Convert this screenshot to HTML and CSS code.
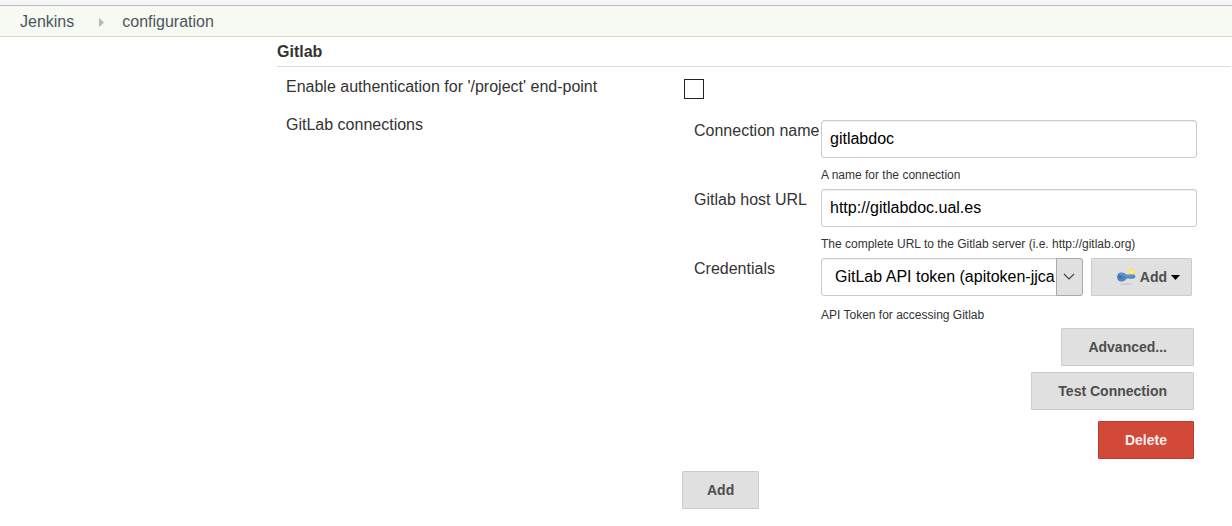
FILE: index.html
```html
<!DOCTYPE html>
<html lang="en">
<head>
<meta charset="utf-8">
<title>configuration [Jenkins]</title>
<link rel="stylesheet" href="styles.css">
</head>
<body>
<header class="topbar"></header>
<nav class="breadcrumbs" aria-label="Breadcrumb">
  <a class="crumb" href="#jenkins">Jenkins</a>
  <svg class="crumb-arrow" width="5" height="9" viewBox="0 0 5 9" aria-hidden="true"><path d="M0 0L5 4.5L0 9Z" fill="#b4b6b2"/></svg>
  <a class="crumb" href="#configuration">configuration</a>
</nav>
<main class="content">
  <h2 class="section-title">Gitlab</h2>
  <form class="settings">
    <label class="setting-name" for="auth">Enable authentication for '/project' end-point</label>
    <div class="setting-value"><input class="checkbox" type="checkbox" id="auth"></div>

    <div class="setting-name">GitLab connections</div>
    <div class="setting-value">
      <div class="connection">
        <label class="field-name" for="name">Connection name</label>
        <div class="field">
          <input class="textbox" type="text" id="name" value="gitlabdoc">
          <p class="help">A name for the connection</p>
        </div>
        <label class="field-name" for="url">Gitlab host URL</label>
        <div class="field">
          <input class="textbox" type="text" id="url" value="http://gitlabdoc.ual.es">
          <p class="help">The complete URL to the Gitlab server (i.e. http://gitlab.org)</p>
        </div>
        <label class="field-name" for="credentials">Credentials</label>
        <div class="field">
          <div class="credentials">
            <div class="select-wrap">
              <select class="select" id="credentials"><option>GitLab API token (apitoken-jjca</option></select>
              <span class="select-arrow"><svg width="12" height="8" viewBox="0 0 12 8" aria-hidden="true"><path d="M1 1L6 6L11 1" fill="none" stroke="#444" stroke-width="1.2"/></svg></span>
            </div>
            <button class="button button-key" type="button">
              <svg width="20" height="18" viewBox="0 0 20 18" aria-hidden="true">
                <ellipse cx="10" cy="16" rx="6" ry="1" fill="#d0d0d0"/>
                <circle cx="15.500" cy="4" r="3.200" fill="#efe96a"/>
                <circle cx="15.500" cy="4" r="1.600" fill="#fff766"/>
                <path d="M5.500 4.500C8 4.500 9 5.500 10 6.500H18L19.500 8L18.500 10.500H16L15 11L14 10.500H10.500C9.500 12.500 8 13.500 5.500 13.500C2.500 13.500 1 11.500 1 9C1 6.500 2.700 4.500 5.500 4.500Z" fill="#4f83c0"/>
                <path d="M4 6.500C6 5.500 8 6.500 9 8H17" fill="none" stroke="#7ba3d4"/>
                <circle cx="4" cy="9" r="1.300" fill="#3d6ca8"/>
              </svg>
              <span>Add</span>
              <svg width="9" height="5" viewBox="0 0 9 5" aria-hidden="true"><path d="M0 0H9L4.500 5Z" fill="#000"/></svg>
            </button>
          </div>
          <p class="help help-last">API Token for accessing Gitlab</p>
        </div>
      </div>
      <div class="actions">
        <button class="button button-action" type="button">Advanced...</button>
        <button class="button button-action" type="button">Test Connection</button>
        <button class="button button-action button-danger" type="button">Delete</button>
      </div>
      <button class="button button-add" type="button">Add</button>
    </div>
  </form>
</main>
</body>
</html>
```
FILE: styles.css
```css
* {
  box-sizing: border-box;
}

body {
  margin: 0;
  background: #fff;
  color: #333;
  font: 16px/20px "Liberation Sans", Arial, sans-serif;
}

input,
select,
button {
  font: inherit;
}

.topbar {
  height: 6px;
  background: #f6f6f6;
  border-bottom: 1px solid #bbb;
}

.breadcrumbs {
  display: flex;
  align-items: center;
  padding: 6px 20px 4px;
  background: #f6faf2;
  border-bottom: 1px solid #d3d7cf;
}

.crumb {
  color: #4d545d;
  text-decoration: none;
}

.crumb-arrow {
  margin: 0 18px 0 25px;
}

.content {
  margin-left: 277px;
}

.section-title {
  margin: 0 1px 0 0;
  padding: 5px 0 4px;
  border-bottom: 1px solid #ddd;
  font-size: 16px;
}

.settings {
  display: grid;
  grid-template-columns: 396px 1fr;
  row-gap: 8px;
  padding: 10px 35px 16px 9px;
}

.setting-name {
  padding-bottom: 10px;
}

.setting-value {
  display: flow-root;
}

.checkbox {
  appearance: none;
  display: block;
  width: 20px;
  height: 20px;
  margin: 2px;
  border: 1px solid #222;
  background: #fff;
}

.connection {
  display: grid;
  grid-template-columns: 127px 1fr;
  padding: 5px 0 0 12px;
}

.field-name {
  padding-top: 1px;
  white-space: nowrap;
}

.textbox,
.select {
  display: block;
  width: 100%;
  height: 38px;
  border: 1px solid #ccc;
  border-radius: 3px;
  background: #fff;
  box-shadow: inset 0 1px 1px #eee;
  color: #000;
}

.textbox {
  padding: 0 8px;
}

.help {
  margin: 10px 0 7px;
  color: #333;
  font-size: 12px;
  line-height: 14px;
}

.help-last {
  margin: 12px 0 6px;
}

.credentials {
  display: flex;
  justify-content: space-between;
  gap: 8px;
  padding-right: 5px;
}

.select-wrap {
  position: relative;
  flex: 1;
}

.select {
  appearance: none;
  padding: 0 26px 0 13px;
}

.select-arrow {
  position: absolute;
  top: 0;
  right: 0;
  bottom: 0;
  display: flex;
  align-items: center;
  justify-content: center;
  width: 27px;
  border: 1px solid #aaa;
  border-radius: 0 3px 3px 0;
  background: #e1e1e1;
  pointer-events: none;
}

.button {
  height: 38px;
  padding: 0 24px;
  border: 1px solid #ccc;
  border-radius: 1px;
  background: #e0e0e0;
  color: #4d4d4d;
  font-size: 14px;
  font-weight: bold;
}

.button-key {
  display: flex;
  align-items: center;
  gap: 4px;
  padding: 0 11px 0 24px;
}

.actions {
  display: flex;
  flex-direction: column;
  align-items: flex-end;
  gap: 6px;
  padding-right: 3px;
}

.button-action {
  padding: 0 26px;
}

.button-danger {
  margin-top: 5px;
  border-color: #b93c2e;
  background: #d24939;
  color: #eee;
}

.button-add {
  margin-top: 12px;
}
```
